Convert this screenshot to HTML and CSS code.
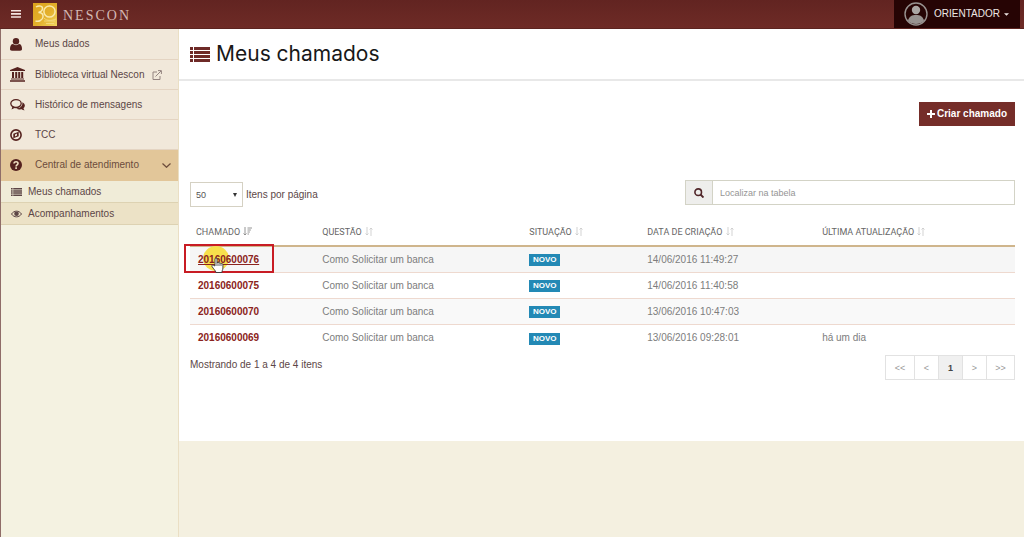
FILE: index.html
```html
<!DOCTYPE html>
<html lang="pt-BR">
<head>
<meta charset="utf-8">
<meta name="viewport" content="width=device-width, initial-scale=1">
<title>Meus chamados</title>
<link rel="stylesheet" href="styles.css">
</head>
<body>
<svg class="defs" aria-hidden="true">
  <symbol id="i-list" viewBox="0 0 20 15" preserveAspectRatio="none"><path d="M0 0h3v3H0zM4 0h16v3H4zM0 4h3v3H0zM4 4h16v3H4zM0 8h3v3H0zM4 8h16v3H4zM0 12h3v3H0zM4 12h16v3H4z"/></symbol>
  <symbol id="i-sort" viewBox="0 0 8 9"><path d="M2 0v8M.5 6.500 2 8l1.500-1.500M6 9V1M4.500 2.500 6 1l1.500 1.500" fill="none" stroke="currentColor" stroke-width=".8"/></symbol>
</svg>
<header class="topbar">
  <button class="menu-btn" aria-label="Menu"><svg viewBox="0 0 10 8" width="10" height="8"><path d="M0 0h10v1.600H0zM0 3.100h10v1.600H0zM0 6.200h10v1.600H0z"/></svg></button>
  <a class="brand" href="#">
    <svg class="logo" viewBox="0 0 24 23" width="24" height="23">
      <defs><linearGradient id="gold" x1="0" y1="0" x2="1" y2="1"><stop offset="0" stop-color="#dda21c"/><stop offset=".55" stop-color="#e3b02c"/><stop offset="1" stop-color="#f2d661"/></linearGradient></defs>
      <path fill="url(#gold)" d="M0 0h24v23H0z"/>
      <path d="M3 4c3-2 7-1 6.500 2-.3 2-2 3-4 3.500 3 0 5 1.500 4.500 4.500C9.500 17 6 19 2.500 18" fill="none" stroke="#f8e9ad" stroke-width="1.500"/>
      <circle cx="16.500" cy="8.500" r="5.600" fill="none" stroke="#f9e8aa" stroke-width="1.500"/>
      <path d="M11 15c3 3 7 3 12 1M11 18h11M13 20.500h8" fill="none" stroke="#f5dd86" stroke-width=".8"/>
    </svg>
    <span class="brand-name">NESCON</span>
  </a>
  <button class="user">
    <svg viewBox="0 0 24 24" width="24" height="24"><circle cx="12" cy="12" r="11" fill="#260404" stroke="#989290" stroke-width="1.400"/><circle cx="12" cy="8" r="4.200" fill="#aaa5a3"/><path d="M4 19c1-5 4-6 8-6s7 1 8 6c-4 4-12 4-16 0z" fill="#989290"/></svg>
    <span>ORIENTADOR</span>
    <svg viewBox="0 0 6 3" width="5" height="3"><path d="M0 0h6L3 3z"/></svg>
  </button>
</header>
<div class="shell">
  <nav class="sidebar">
    <a class="item tall" href="#"><span class="icon"><svg viewBox="0 0 12 13" width="12" height="13"><circle cx="6" cy="3.300" r="3.200"/><path d="M0 11c0-3 1-5 3-5 1.500 1.500 4.500 1.500 6 0 2 0 3 2 3 5 0 1-.6 1.700-2 1.700H2C.6 12.700 0 12 0 11z"/></svg></span>Meus dados</a>
    <a class="item" href="#"><span class="icon"><svg viewBox="0 0 15 15" width="15" height="15"><path d="M7.500 0 15 3v1H0V3zM2 5h2v6H2zM5.200 5h2v6h-2zM8.200 5h2v6h-2zM11.200 5h2v6h-2zM1 11.400h13v1H1zM0 13.200h15v1.500H0z"/></svg></span>Biblioteca virtual Nescon<svg class="ext" viewBox="0 0 10 10" width="10" height="10"><path d="M5 2H1v7.500h7V6M3.500 6.500 9 1M6 .6h3.400V4" fill="none" stroke="currentColor"/></svg></a>
    <a class="item" href="#"><span class="icon"><svg viewBox="0 0 15 12" width="15" height="12"><ellipse cx="6" cy="4.600" rx="5.200" ry="3.900" fill="none" stroke="currentColor" stroke-width="1.300"/><path d="M2.500 7.500 1.500 10.500 5.500 8.500zM12.300 3.200c3 1.400 3.300 4.300 1.200 6 .1.900.6 1.500 1.200 2.100-1.300.1-2.300-.3-3-1-2 .4-4 0-5.200-.9 3.500 0 6.400-2.300 5.800-6.200z"/></svg></span>Histórico de mensagens</a>
    <a class="item" href="#"><span class="icon"><svg viewBox="0 0 12 12" width="12" height="12"><circle cx="6" cy="6" r="5.100" fill="none" stroke="currentColor" stroke-width="1.600"/><path d="M8.700 2.700v4.500L3.300 9.300V4.800zM5 5.400v2L7 6.600v-2z" fill-rule="evenodd"/></svg></span>TCC</a>
    <a class="item tall current" href="#"><span class="icon"><svg viewBox="0 0 12 12" width="12" height="12"><circle cx="6" cy="6" r="6"/><path d="M4 4.600C4 2 8.200 2.200 8 4.500 7.900 5.800 6.100 5.800 6.100 7.400M6.100 8.300v1.700" fill="none" stroke="#f3e2c4" stroke-width="1.600"/></svg></span>Central de atendimento<svg class="chev" viewBox="0 0 9 5" width="9" height="5"><path d="M.5.500 4.500 4.300 8.500.500" fill="none" stroke="currentColor" stroke-width="1.200"/></svg></a>
    <a class="sub" href="#"><svg width="11" height="8"><use href="#i-list"/></svg>Meus chamados</a>
    <a class="sub alt" href="#"><svg viewBox="0 0 11 8" width="11" height="8"><path d="M.5 4C3 .2 8 .2 10.500 4 8 7.800 3 7.800.500 4z" fill="none" stroke="currentColor"/><circle cx="5.500" cy="3.700" r="2.300"/></svg>Acompanhamentos</a>
  </nav>
  <main class="main">
    <div class="page">
      <div class="page-head"><svg width="20" height="15"><use href="#i-list"/></svg><h1>Meus chamados</h1></div>
      <div class="body">
        <div class="actions"><button class="create"><svg viewBox="0 0 8 8" width="8" height="8"><path d="M3 0h2v3h3v2H5v3H3V5H0V3h3z"/></svg>Criar chamado</button></div>
        <div class="filters">
          <div class="per-page">
            <span class="select-wrap"><select id="pp"><option>50</option></select><svg viewBox="0 0 4 4" width="4" height="4"><path d="M0 0h4L2 4z"/></svg></span>
            <label for="pp">Itens por página</label>
          </div>
          <div class="search">
            <button aria-label="Localizar"><svg viewBox="0 0 10 10" width="10" height="10"><circle cx="4.200" cy="4.200" r="3.300" fill="none" stroke="currentColor" stroke-width="1.600"/><path d="m6.500 6.500 3 3" stroke="currentColor" stroke-width="1.900"/></svg></button>
            <input type="text" placeholder="Localizar na tabela" aria-label="Localizar na tabela">
          </div>
        </div>
        <table class="tickets">
          <colgroup><col class="c1"><col class="c2"><col class="c3"><col class="c4"><col></colgroup>
          <thead><tr>
            <th>CHAMADO <svg class="sorted" viewBox="0 0 9 9" width="9" height="9"><path d="M2 0v8M.5 6.500 2 8l1.500-1.500M4.500 1H9M4.500 3h3.400M4.500 5h2.400M4.500 7H6" fill="none" stroke="currentColor" stroke-width=".9"/></svg></th>
            <th>QUESTÃO <svg width="8" height="9"><use href="#i-sort"/></svg></th>
            <th>SITUAÇÃO <svg width="8" height="9"><use href="#i-sort"/></svg></th>
            <th>DATA DE CRIAÇÃO <svg width="8" height="9"><use href="#i-sort"/></svg></th>
            <th>ÚLTIMA ATUALIZAÇÃO <svg width="8" height="9"><use href="#i-sort"/></svg></th>
          </tr></thead>
          <tbody>
            <tr><td class="first"><span class="halo"></span><a class="hover" href="#">20160600076</a>
              <span class="frame"></span>
              <svg class="pointer" viewBox="0 0 13 16" width="13" height="16"><path d="M4 9V2c0-1.500 2-1.500 2 0v4c.3-1 1.800-.8 2 .3.400-.8 1.700-.5 1.900.5.600-.7 2-.3 2 .9V11c0 2-1 2.500-1 4.500H5C4.500 13.500 2.500 12 1 9.500.4 8.300 1.800 7.500 2.700 8.400z" fill="#fff" stroke="#333" stroke-width=".9"/><path d="M6 6v3M8 6.500V9M10 7v2" stroke="#333" stroke-width=".8"/></svg></td>
              <td>Como Solicitar um banca</td><td><span class="tag">NOVO</span></td><td>14/06/2016 11:49:27</td><td></td></tr>
            <tr><td class="first"><a href="#">20160600075</a></td><td>Como Solicitar um banca</td><td><span class="tag">NOVO</span></td><td>14/06/2016 11:40:58</td><td></td></tr>
            <tr><td class="first"><a href="#">20160600070</a></td><td>Como Solicitar um banca</td><td><span class="tag">NOVO</span></td><td>13/06/2016 10:47:03</td><td></td></tr>
            <tr><td class="first"><a href="#">20160600069</a></td><td>Como Solicitar um banca</td><td><span class="tag">NOVO</span></td><td>13/06/2016 09:28:01</td><td>há um dia</td></tr>
          </tbody>
        </table>
        <div class="foot">
          <p>Mostrando de 1 a 4 de 4 itens</p>
          <div class="pager"><button class="wide">&lt;&lt;</button><button>&lt;</button><button class="on">1</button><button>&gt;</button><button class="wide">&gt;&gt;</button></div>
        </div>
      </div>
    </div>
  </main>
</div>
</body>
</html>
```
FILE: styles.css
```css
* { box-sizing: border-box; }
body {
  margin: 0;
  min-height: 100vh;
  display: flex;
  flex-direction: column;
  background: #f4f0e0;
  color: #5c4646;
  font: 10px/14px "Liberation Sans", Arial, sans-serif;
}
button, input, select { font: inherit; color: inherit; margin: 0; border-radius: 0; }
button { cursor: pointer; border: 0; padding: 0; }
a { color: inherit; text-decoration: none; }
svg { fill: currentColor; flex: none; }
.defs { position: absolute; width: 0; height: 0; }

.topbar {
  height: 29px;
  display: flex;
  align-items: center;
  background: linear-gradient(#622421, #6e2b26);
  border-bottom: 1px solid #5c2420;
  padding-right: 4px;
}
.menu-btn { width: 33px; height: 28px; background: none; color: #f4e6e2; }
.menu-btn svg { display: block; margin: 0 auto 0 11px; }
.brand { display: flex; align-items: center; gap: 6px; color: #d3b9b4; }
.brand-name { font: 14px/16px "Liberation Serif", serif; letter-spacing: 2px; padding-top: 3px; }
.user {
  margin-left: auto;
  align-self: stretch;
  display: flex;
  align-items: center;
  gap: 6px;
  padding: 0 11px 0 10px;
  background: #260404;
  color: #eee6e4;
}
.user svg:last-child { margin-left: -2px; }

.shell { flex: 1; display: flex; }
.sidebar {
  width: 179px;
  flex: none;
  border-left: 1px solid #8f6d68;
  border-right: 1px solid #eadfc4;
  background: #f4f2e1;
}
.item {
  display: flex;
  align-items: center;
  height: 30px;
  padding-right: 7px;
  background: #f1e8da;
  border-bottom: 1px solid #e4d4c2;
}
.tall { height: 31px; }
.icon { width: 34px; display: flex; padding-left: 9px; color: #55221f; }
.ext { margin-left: 7px; color: #948480; }
.current { background: #e2c699; border-color: #e2c699; color: #6c4c3c; }
.chev { margin-left: auto; }
.sub {
  display: flex;
  align-items: center;
  gap: 6px;
  height: 22px;
  padding-left: 10px;
  background: #f0ecd8;
  border-bottom: 1px solid #ddd2b2;
}
.alt { background: #ece2c6; }

.main { flex: 1; min-width: 0; }
.page { background: #fff; padding-bottom: 61px; }
.page-head {
  height: 52px;
  display: flex;
  align-items: center;
  gap: 6px;
  padding-left: 11px;
  border-bottom: 2px solid #e8e8e8;
  color: #6e2a27;
}
h1 { margin: 0; font: 21px/28px Inter, sans-serif; color: #181818; }
.body { padding: 21px 9px 0 11px; }
.actions { display: flex; justify-content: flex-end; }
.create {
  display: flex;
  align-items: center;
  gap: 2px;
  height: 24px;
  padding: 0 8px;
  background: #752d29;
  color: #fff;
  font-weight: bold;
}
.filters { display: flex; justify-content: space-between; align-items: flex-end; margin-top: 54px; }
.per-page { display: flex; align-items: center; gap: 3px; }
.select-wrap { display: flex; align-items: center; border: 1px solid #d5d1c3; height: 25px; padding-right: 5px; background: #fff; color: #333; }
select { appearance: none; width: 46px; border: 0; padding: 0 5px; background: none; color: #555; font-size: 9px; height: 22px; }
.select-wrap svg { margin-left: -4px; }
.search { display: flex; width: 40%; height: 25px; margin-bottom: 2px; border: 1px solid #d3d3c6; }
.search button { width: 27px; background: #eeeeec; border-right: 1px solid #d3d3c6; color: #51272a; }
.search button svg { display: block; margin: auto; }
.search input { flex: 1; min-width: 0; border: 0; padding: 0 7px; font-size: 9px; background: #fff; }
.search input::placeholder { color: #959595; opacity: 1; }

.tickets { width: 100%; margin-top: 12px; table-layout: fixed; border-collapse: separate; border-spacing: 0; color: #7d7d7d; }
.c1 { width: 15.3%; }
.c2 { width: 25.1%; }
.c3 { width: 14.3%; }
.c4 { width: 21.2%; }
th { height: 28px; padding: 0 6px; text-align: left; font: 9px/14px Roboto, sans-serif; border-bottom: 2px solid #cfb58c; color: #666; }
th svg { vertical-align: -1px; margin-left: 1px; color: #c8c8c8; }
th .sorted { color: #888; }
td { height: 26px; padding: 0 6px; border-bottom: 1px solid #eed9cf; }
tbody tr:nth-child(odd) { background: #f6f6f6; }
tbody tr:last-child { background: #fff; }
tbody tr:nth-last-child(-n+2) { background: #fff; }
tbody tr:nth-child(3) { background: #f9f9f9; }
tbody tr:last-child td { border-bottom: 0; }
.first { position: relative; padding-left: 8px; font-weight: bold; color: #8b2320; }
.first a { position: relative; }
.hover { text-decoration: underline; }
.frame { position: absolute; left: -6px; top: -3px; width: 90px; height: 29px; border: 2px solid #c81c24; }
.halo { position: absolute; left: 13px; top: -1px; width: 26px; height: 25px; border-radius: 50%; background: #f7e04c; }
.pointer { position: absolute; left: 21px; top: 10px; }
.tag { display: block; width: 31px; height: 12px; margin-top: 1px; background: #2389b5; color: #fff; font: bold 8px/12px "Liberation Sans", Arial, sans-serif; text-align: center; }
.foot { display: flex; justify-content: space-between; align-items: flex-start; padding-top: 4px; }
.foot p { margin: 3px 0 0; }
.pager { display: flex; border: 1px solid #e2e2e2; }
.pager button { width: 24px; height: 23px; background: #fff; color: #999; font-size: 9px; }
.pager button + button { border-left: 1px solid #e2e2e2; }
.pager .wide { width: 28px; }
.pager .on { background: #f0f0f0; color: #444; font-weight: bold; }
```
